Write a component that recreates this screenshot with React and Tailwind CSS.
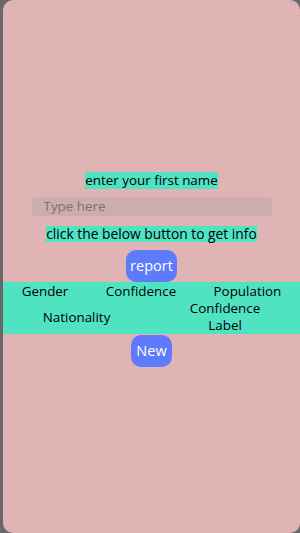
import React from 'react';

export default function App() {
  return (
    <div className="h-[533px] w-[300px] bg-[#696969] pl-[3px]" style={{ fontFamily: '"Open Sans", "Noto Sans", sans-serif' }}>
      <div className="flex h-full flex-col items-center justify-center rounded-[10px] bg-[#e0b4b4] pt-[6px] text-[13.4px] text-black">
        <p className="bg-[#50e3c2] leading-[17px]">enter your first name</p>
        <input
          placeholder="Type here"
          className="mt-2 h-[19px] w-[240px] rounded-[4px] bg-[#cbadad] px-3 text-[13.4px] placeholder:text-[#7d7070] outline-none"
        />
        <p className="mt-[10px] bg-[#50e3c2] text-[13.8px] leading-[16px]">click the below button to get info</p>
        <button className="mt-2 h-8 w-[51px] rounded-[10px] bg-[#5d7bfc] text-[14.5px] text-white">report</button>
        <div className="w-full bg-[#50e3c2]">
          <div className="flex justify-around leading-[18px]">
            <span>Gender</span>
            <span>Confidence</span>
            <span>Population</span>
          </div>
          <div className="flex items-center justify-around leading-[17px]">
            <span>Nationality</span>
            <span className="text-center">Confidence<br />Label</span>
          </div>
        </div>
        <button className="mt-px h-8 w-[41px] rounded-[10px] bg-[#5d7bfc] text-[14.5px] text-white">New</button>
      </div>
    </div>
  );
}
